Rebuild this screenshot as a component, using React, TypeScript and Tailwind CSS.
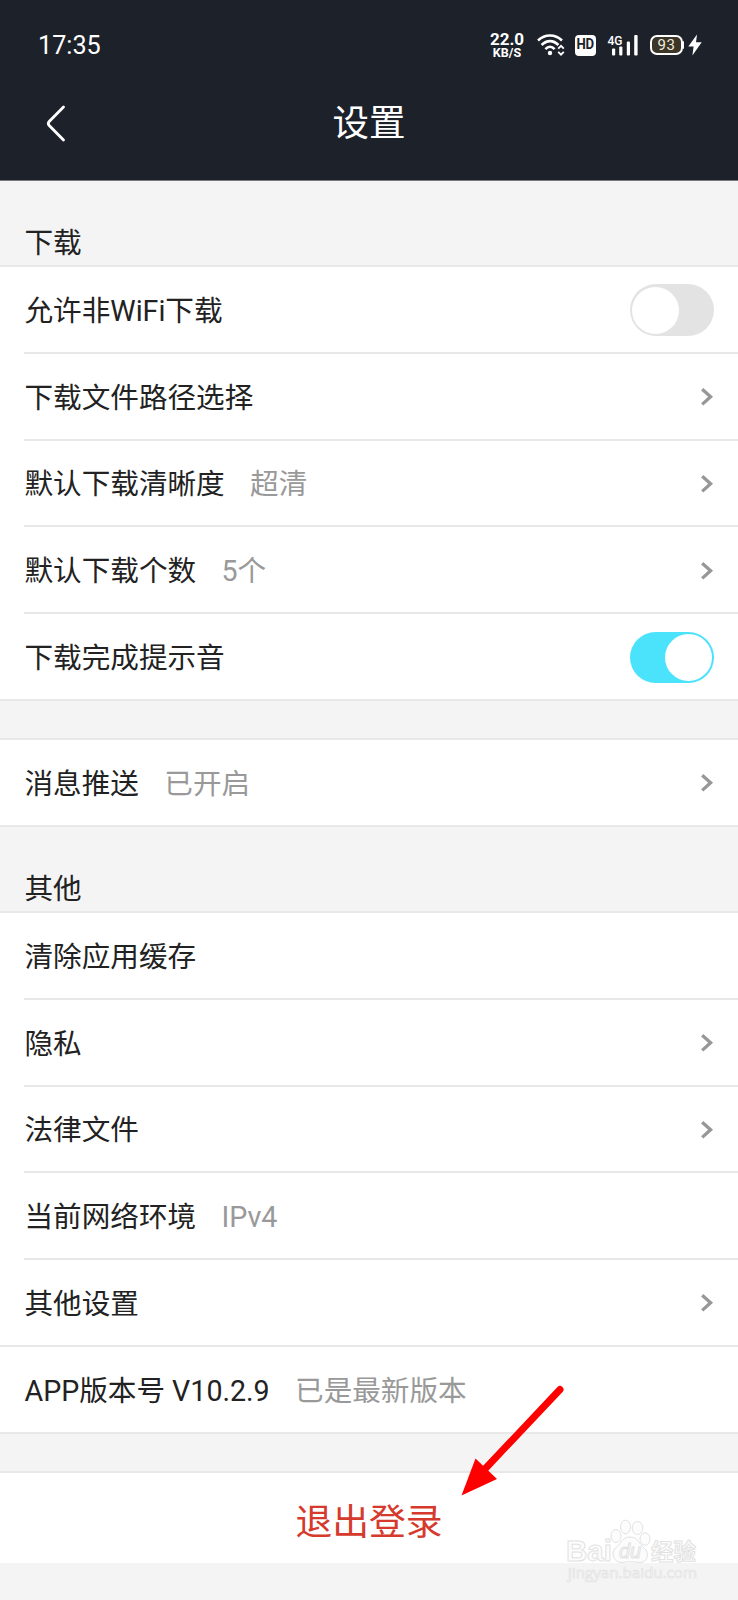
import type { ReactNode } from "react";

function Chevron() {
  return (
    <svg width="14" height="20" viewBox="0 0 14 20" className="mr-[24px] shrink-0" fill="none">
      <path d="M2.2 2.2 L10.6 9.8 L2.2 17.4" stroke="#979797" strokeWidth="3.3" />
    </svg>
  );
}

function Toggle({ on = false }: { on?: boolean }) {
  return (
    <div
      className={
        on
          ? "mr-[24.4px] flex h-[51px] w-[84px] shrink-0 items-center justify-end rounded-full bg-[#4be3fb] pr-[2px]"
          : "mr-[24.4px] flex h-[52px] w-[84px] shrink-0 items-center justify-start rounded-full bg-[#e3e3e3] pl-[2px]"
      }
    >
      <div className="size-[47px] rounded-full bg-white" />
    </div>
  );
}

type RowProps = {
  label: string;
  value?: string;
  end?: ReactNode;
  edge?: boolean;
};

function Row({ label, value, end, edge = false }: RowProps) {
  return (
    <div className={edge ? "h-[86.75px] bg-white" : "h-[86.75px] bg-white pl-[24px]"}>
      <div
        className={
          edge
            ? "flex h-full items-center border-b-2 border-[#e8e8e8] pl-[24.5px] pt-[2px]"
            : "flex h-full items-center border-b-2 border-[#e8e8e8] pl-[0.5px] pt-[2px]"
        }
      >
        <span className="whitespace-pre pt-px text-[28.6px] leading-[40px] text-[#222222]">{label}</span>
        {value && <span className="ml-[25.4px] pt-px text-[28.6px] leading-[40px] text-[#999999]">{value}</span>}
        <span className="flex-1" />
        {end}
      </div>
    </div>
  );
}

function StatusIcons() {
  return (
    <div className="flex items-center text-white">
      <div className="flex w-[34px] flex-col items-center pt-[2px] font-bold">
        <span className="text-[17px] leading-[13.5px]">22.0</span>
        <span className="text-[12.5px] leading-[12px]">KB/S</span>
      </div>
      <svg width="28" height="24" viewBox="0 0 28 24" className="ml-[13px]" fill="none" stroke="white" strokeWidth="2.6">
        <path d="M1 7.5 C8 0.8 18 0.8 25 7.5" />
        <path d="M4.6 12 C9.6 6.8 16.4 6.8 21.4 12" />
        <path d="M8.4 16.2 C11.2 13 14.8 13 17.6 16.2" />
        <circle cx="13" cy="20" r="2.2" fill="white" stroke="none" />
        <path d="M21.2 15.6 L24 12.9 L26.8 15.6 M21.2 18.9 L24 21.6 L26.8 18.9" strokeWidth="1.9" />
      </svg>
      <div className="ml-[10px] flex h-[21px] w-[21px] items-center justify-center rounded-[4px] bg-white text-[15.5px] font-bold leading-none tracking-[-0.5px] text-[#1d212a]">
        <span className="scale-x-[.85]">HD</span>
      </div>
      <svg width="32" height="24" viewBox="0 0 32 24" className="ml-[11px]" fill="white">
        <text x="0.5" y="11.5" fontSize="13.5" fontFamily="Roboto" fontWeight="500" textLength="15" lengthAdjust="spacingAndGlyphs">
          4G
        </text>
        <rect x="5" y="15.5" width="3.2" height="7" rx="1" />
        <rect x="12.2" y="13.5" width="3.2" height="9" rx="1" />
        <rect x="19.8" y="8.5" width="3.2" height="14" rx="1" />
        <rect x="27.2" y="2" width="3.4" height="20.5" rx="1" />
      </svg>
      <div className="ml-[11px] flex h-[20px] w-[33px] items-center justify-center rounded-[7px] border-2 border-white bg-[#3b3628] text-[15px] leading-none tracking-[0.5px] text-[#f1ecdc]">
        93
      </div>
      <div className="h-[8px] w-px rounded-r bg-white" />
      <svg width="14" height="22" viewBox="0 0 14 22" className="ml-[4px]" fill="white">
        <path d="M9 0.5 L0.3 12.6 H5.6 L4.4 21.5 L13.7 8.2 H8 Z" />
      </svg>
    </div>
  );
}

function Watermark() {
  return (
    <svg
      width="136"
      height="66"
      viewBox="0 0 136 66"
      className="absolute left-[564px] top-[1518px]"
      fill="#fcfcfc"
      stroke="#e2e2e2"
      strokeWidth="1"
    >
      <text x="2" y="43" fontSize="30" fontFamily="Liberation Sans" fontWeight="700" textLength="46" lengthAdjust="spacingAndGlyphs">
        Bai
      </text>
      <ellipse cx="52" cy="18" rx="5" ry="6.5" />
      <ellipse cx="61.5" cy="9" rx="5" ry="6.8" />
      <ellipse cx="73.5" cy="10" rx="5.3" ry="6.5" />
      <ellipse cx="81" cy="21" rx="5" ry="6.3" />
      <path d="M66 19 C58 19 57 26 51.5 30 C46 35 50 45 58 44.5 C64 43.5 69 43.5 75 44.5 C84 45 86 35 80 30 C75 26 74 19 66 19 Z" />
      <text x="55" y="40" fontSize="20" fontFamily="Liberation Sans" fontStyle="italic" textLength="22" lengthAdjust="spacingAndGlyphs">
        du
      </text>
      <text x="87" y="42" fontSize="23" fontFamily="Noto Sans CJK SC" fontWeight="700" textLength="45" lengthAdjust="spacingAndGlyphs">
        经验
      </text>
      <text x="4" y="60" fontSize="15" fontFamily="Open Sans" strokeWidth="0.7" textLength="129" lengthAdjust="spacingAndGlyphs">
        jingyan.baidu.com
      </text>
    </svg>
  );
}

export default function App() {
  return (
    <div className="relative flex h-[1600px] w-[738px] flex-col overflow-hidden bg-[#f4f4f4] font-['Roboto','Noto_Sans_CJK_SC',sans-serif]">
      <header className="h-[181px] shrink-0 border-b border-[#77777d] bg-[#1d212a]">
        <div className="flex h-[90px] items-center justify-between pl-[38px] pr-[36px]">
          <span className="pt-px text-[25.2px] leading-none text-white">17:35</span>
          <StatusIcons />
        </div>
        <div className="grid h-[67px] grid-cols-3 items-center">
          <svg width="24" height="40" viewBox="0 0 24 40" className="ml-[45px]" fill="none">
            <path
              d="M18.5 3 L4.2 17.5 Q2.4 19.5 4.2 21.5 L18.5 36"
              stroke="white"
              strokeWidth="2.8"
              strokeLinecap="round"
            />
          </svg>
          <h1 className="pt-[2px] text-center text-[36.5px] leading-none text-white">设置</h1>
        </div>
      </header>

      <section className="shrink-0">
        <h2 className="flex h-[86px] items-end border-b-2 border-[#e8e8e8] pb-[2px] pl-[24.5px] text-[28.6px] leading-[40px] text-[#222222]">
          下载
        </h2>
        <Row label="允许非WiFi下载" end={<Toggle />} />
        <Row label="下载文件路径选择" end={<Chevron />} />
        <Row label="默认下载清晰度" value="超清" end={<Chevron />} />
        <Row label="默认下载个数" value="5个" end={<Chevron />} />
        <Row label="下载完成提示音" end={<Toggle on />} edge />
      </section>

      <section className="shrink-0">
        <div className="h-[39px] border-b-2 border-[#e8e8e8]" />
        <Row label="消息推送" value="已开启" end={<Chevron />} edge />
      </section>

      <section className="shrink-0">
        <h2 className="flex h-[86.5px] items-end border-b-2 border-[#e8e8e8] pb-[2px] pl-[24.5px] text-[28.6px] leading-[40px] text-[#222222]">
          其他
        </h2>
        <Row label="清除应用缓存" />
        <Row label="隐私" end={<Chevron />} />
        <Row label="法律文件" end={<Chevron />} />
        <Row label="当前网络环境" value="IPv4" />
        <Row label="其他设置" end={<Chevron />} edge />
        <Row label="APP版本号 V10.2.9" value="已是最新版本" edge />
      </section>

      <div className="h-[39px] shrink-0 border-b-2 border-[#e8e8e8]" />
      <button className="flex h-[90px] shrink-0 items-center justify-center bg-white pt-[11px] text-[36.8px] leading-none text-[#d53a2c]">
        退出登录
      </button>

      <svg width="110" height="116" viewBox="0 0 110 116" className="absolute left-[457px] top-[1382px]">
        <path d="M103 7.5 L27 88" stroke="#ff0000" strokeWidth="7" strokeLinecap="round" />
        <path d="M4.5 113.5 L18.5 76.5 L40 97 Z" fill="#ff0000" />
      </svg>
      <Watermark />
    </div>
  );
}
